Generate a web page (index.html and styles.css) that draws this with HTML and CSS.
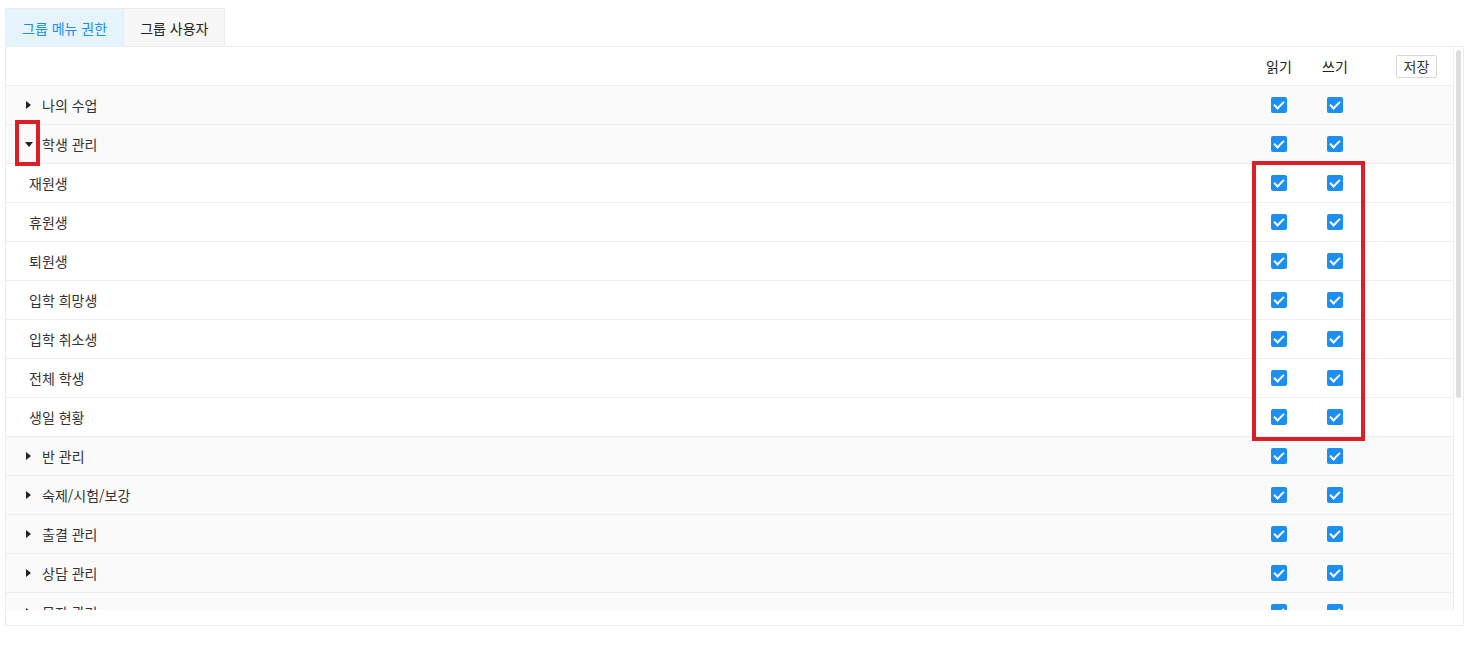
FILE: index.html
```html
<!DOCTYPE html>
<html lang="ko">
<head>
<meta charset="utf-8">
<title>그룹 메뉴 권한</title>
<link rel="stylesheet" href="styles.css">
</head>
<body>
<div class="page">
  <div class="tabs">
    <div class="tab tab-active">그룹 메뉴 권한</div>
    <div class="tab">그룹 사용자</div>
  </div>
  <div class="panel">
    <div class="viewport">
      <div class="scroller">
        <div class="row head">
          <div class="name"></div>
          <div class="col">읽기</div>
          <div class="col">쓰기</div>
          <div class="act"><button class="save">저장</button></div>
        </div>
        <div class="row group"><div class="name"><span class="caret right"></span>나의 수업</div><div class="col"><span class="cb"></span></div><div class="col"><span class="cb"></span></div><div class="act"></div></div>
        <div class="row group"><div class="name"><span class="caret down"></span>학생 관리</div><div class="col"><span class="cb"></span></div><div class="col"><span class="cb"></span></div><div class="act"></div></div>
        <div class="row sub"><div class="name">재원생</div><div class="col"><span class="cb"></span></div><div class="col"><span class="cb"></span></div><div class="act"></div></div>
        <div class="row sub"><div class="name">휴원생</div><div class="col"><span class="cb"></span></div><div class="col"><span class="cb"></span></div><div class="act"></div></div>
        <div class="row sub"><div class="name">퇴원생</div><div class="col"><span class="cb"></span></div><div class="col"><span class="cb"></span></div><div class="act"></div></div>
        <div class="row sub"><div class="name">입학 희망생</div><div class="col"><span class="cb"></span></div><div class="col"><span class="cb"></span></div><div class="act"></div></div>
        <div class="row sub"><div class="name">입학 취소생</div><div class="col"><span class="cb"></span></div><div class="col"><span class="cb"></span></div><div class="act"></div></div>
        <div class="row sub"><div class="name">전체 학생</div><div class="col"><span class="cb"></span></div><div class="col"><span class="cb"></span></div><div class="act"></div></div>
        <div class="row sub"><div class="name">생일 현황</div><div class="col"><span class="cb"></span></div><div class="col"><span class="cb"></span></div><div class="act"></div></div>
        <div class="row group"><div class="name"><span class="caret right"></span>반 관리</div><div class="col"><span class="cb"></span></div><div class="col"><span class="cb"></span></div><div class="act"></div></div>
        <div class="row group"><div class="name"><span class="caret right"></span>숙제/시험/보강</div><div class="col"><span class="cb"></span></div><div class="col"><span class="cb"></span></div><div class="act"></div></div>
        <div class="row group"><div class="name"><span class="caret right"></span>출결 관리</div><div class="col"><span class="cb"></span></div><div class="col"><span class="cb"></span></div><div class="act"></div></div>
        <div class="row group"><div class="name"><span class="caret right"></span>상담 관리</div><div class="col"><span class="cb"></span></div><div class="col"><span class="cb"></span></div><div class="act"></div></div>
        <div class="row group"><div class="name"><span class="caret right"></span>문자 관리</div><div class="col"><span class="cb"></span></div><div class="col"><span class="cb"></span></div><div class="act"></div></div>
        <div class="row group"><div class="name"><span class="caret right"></span>수납 관리</div><div class="col"><span class="cb"></span></div><div class="col"><span class="cb"></span></div><div class="act"></div></div>
        <div class="row group"><div class="name"><span class="caret right"></span>일정 관리</div><div class="col"><span class="cb"></span></div><div class="col"><span class="cb"></span></div><div class="act"></div></div>
        <div class="row group"><div class="name"><span class="caret right"></span>공지사항</div><div class="col"><span class="cb"></span></div><div class="col"><span class="cb"></span></div><div class="act"></div></div>
        <div class="row group"><div class="name"><span class="caret right"></span>강사 관리</div><div class="col"><span class="cb"></span></div><div class="col"><span class="cb"></span></div><div class="act"></div></div>
        <div class="row group"><div class="name"><span class="caret right"></span>통계</div><div class="col"><span class="cb"></span></div><div class="col"><span class="cb"></span></div><div class="act"></div></div>
        <div class="row group"><div class="name"><span class="caret right"></span>설정</div><div class="col"><span class="cb"></span></div><div class="col"><span class="cb"></span></div><div class="act"></div></div>
      </div>
      <div class="scrollbar"><div class="thumb"></div></div>
    </div>
  </div>
  <div class="mark mark-caret"></div>
  <div class="mark mark-checks"></div>
</div>
</body>
</html>
```

FILE: styles.css
```css
html, body {
  margin: 0;
  padding: 0;
  background: #fff;
}
body {
  font-family: "Noto Sans CJK KR", "Noto Sans", sans-serif;
  font-size: 14px;
  color: #333;
}
.page {
  position: relative;
  padding: 8px 6px 0 5px;
}
.tabs {
  display: flex;
  height: 38px;
}
.tab {
  display: flex;
  align-items: center;
  padding: 0 16px;
  border: 1px solid #ececec;
  border-bottom: none;
  background: #f7f7f7;
  color: #222;
  font-size: 14px;
}
.tab + .tab {
  border-left: none;
}
.tab-active {
  background: #e6f4fd;
  color: #1a8ff0;
}
.panel {
  border: 1px solid #ececec;
  padding-bottom: 15px;
}
.viewport {
  display: flex;
  height: 563px;
}
.scroller {
  flex: 1;
  min-width: 0;
  overflow: hidden;
}
.scrollbar {
  box-sizing: border-box;
  flex: 0 0 10px;
  width: 10px;
  border-left: 1px solid #eeeeee;
  background: #fff;
  padding: 3px 2px 0 2px;
}
.thumb {
  height: 348px;
  border-radius: 3px;
  background: #dedede;
}
.row {
  display: grid;
  grid-template-columns: 1fr 56px 56px 90px;
  align-items: center;
  height: 38px;
  border-bottom: 1px solid #eeeeee;
}
.row.head {
  background: #fff;
  color: #222;
}
.row.group {
  background: #fafafa;
}
.row.sub {
  background: #fff;
}
.name {
  display: flex;
  align-items: center;
  padding-left: 19px;
  white-space: nowrap;
}
.row.sub .name {
  padding-left: 23px;
}
.col {
  display: flex;
  justify-content: center;
  align-items: center;
}
.act {
  display: flex;
  justify-content: flex-end;
  padding-right: 16px;
}
.save {
  font-family: inherit;
  font-size: 14px;
  color: #333;
  background: #fff;
  border: 1px solid #d9d9d9;
  border-radius: 2px;
  height: 23px;
  width: 41px;
  padding: 0;
  line-height: 21px;
}
.caret {
  width: 0;
  height: 0;
  margin-right: 11px;
}
.caret.right {
  border-top: 4px solid transparent;
  border-bottom: 4px solid transparent;
  border-left: 5px solid #222;
  margin-left: 1px;
}
.caret.down {
  border-left: 4px solid transparent;
  border-right: 4px solid transparent;
  border-top: 5px solid #222;
  margin-right: 9px;
}
.cb {
  position: relative;
  width: 16px;
  height: 16px;
  border-radius: 2px;
  background: #1e8ff2;
}
.cb::after {
  content: "";
  position: absolute;
  left: 5px;
  top: 2px;
  width: 4px;
  height: 8px;
  border-right: 2px solid #fff;
  border-bottom: 2px solid #fff;
  transform: rotate(45deg);
}
.mark {
  position: absolute;
  border: 4px solid #dc1f26;
}
.mark-caret {
  left: 15px;
  top: 120px;
  width: 17px;
  height: 38px;
}
.mark-checks {
  left: 1252px;
  top: 161px;
  width: 105px;
  height: 272px;
}
```
